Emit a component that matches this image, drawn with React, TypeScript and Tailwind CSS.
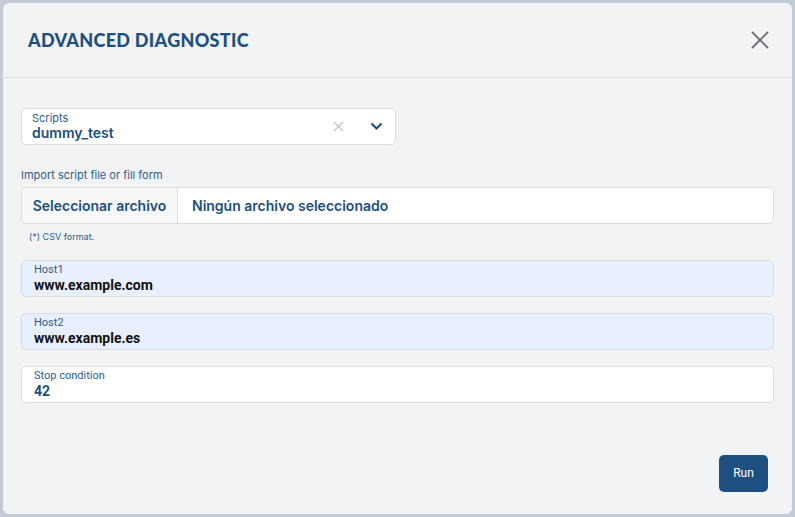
import React from "react";

export default function App() {
  const field = "rounded-[5px] border border-[#d9dde2] h-[37px] px-[12px] flex flex-col justify-center";
  return (
    <div className="w-[795px] h-[517px] bg-[#c3ccd6] p-[3px] overflow-hidden" style={{ fontFamily: "Inter, 'Noto Sans', sans-serif" }}>
      <div className="w-[789px] h-[511px] bg-[#f2f3f5] rounded-[6px] flex flex-col">
        <div className="h-[75px] border-b border-[#d8dbdf] flex items-center justify-between pl-[25px] pr-[22px] shrink-0">
          <div className="text-[#1d4f80] text-[18px] tracking-[0.3px]" style={{ fontFamily: "Lato, Inter, sans-serif", fontWeight: 900 }}>ADVANCED DIAGNOSTIC</div>
          <svg width="20" height="20" viewBox="0 0 20 20" stroke="#6b6f74" strokeWidth="1.8" fill="none"><path d="M2 2L18 18M18 2L2 18" /></svg>
        </div>
        <div className="flex flex-col px-[18px] pt-[30px] flex-1">
          <div className="w-[375px] h-[37px] rounded-[5px] border border-[#d9dde2] bg-white flex items-center justify-between px-[10px]">
            <div className="flex flex-col leading-none">
              <span className="text-[11px] text-[#2f5d8a]">Scripts</span>
              <span className="text-[14px] font-semibold text-[#1d4f80] mt-[2px]">dummy_test</span>
            </div>
            <div className="flex items-center gap-[26px] pr-[2px]">
              <svg width="11" height="11" viewBox="0 0 11 11" stroke="#c7cacd" strokeWidth="1.6"><path d="M1 1L10 10M10 1L1 10" /></svg>
              <svg width="13" height="9" viewBox="0 0 13 9" stroke="#1d4f80" strokeWidth="2.2" fill="none"><path d="M1.5 1.5L6.5 6.5L11.5 1.5" /></svg>
            </div>
          </div>
          <div className="mt-[25px] text-[11px] text-[#2f5d8a] leading-none">Import script file or fill form</div>
          <div className="mt-[6px] h-[37px] rounded-[5px] border border-[#d9dde2] bg-white flex items-center overflow-hidden">
            <div className="h-full w-[156px] bg-[#f6f7f8] border-r border-[#dcdfe3] flex items-center justify-center text-[14px] font-semibold text-[#1d4f80]">Seleccionar archivo</div>
            <div className="pl-[14px] text-[14px] font-semibold text-[#1d4f80]">Ningún archivo seleccionado</div>
          </div>
          <div className="mt-[6px] pl-[8px] text-[9px] text-[#2f5d8a]">(*) CSV format.</div>
          <div className={`${field} mt-[16px] bg-[#e8f0fe] leading-none`} style={{ fontFamily: "Roboto, sans-serif" }}>
            <span className="text-[11px] text-[#2f5d8a]">Host1</span>
            <span className="text-[14px] font-bold text-[#111] mt-[3px]">www.example.com</span>
          </div>
          <div className={`${field} mt-[16px] bg-[#e8f0fe] leading-none`} style={{ fontFamily: "Roboto, sans-serif" }}>
            <span className="text-[11px] text-[#2f5d8a]">Host2</span>
            <span className="text-[14px] font-bold text-[#111] mt-[3px]">www.example.es</span>
          </div>
          <div className={`${field} mt-[16px] bg-white leading-none`} style={{ fontFamily: "Roboto, sans-serif" }}>
            <span className="text-[11px] text-[#2f5d8a]">Stop condition</span>
            <span className="text-[14px] font-bold text-[#1d4f80] mt-[3px]">42</span>
          </div>
          <div className="flex justify-end mt-[52px] pr-[6px]">
            <button className="w-[49px] h-[37px] rounded-[5px] bg-[#1d4f80] text-white text-[12px]" style={{ fontFamily: "Roboto, sans-serif" }}>Run</button>
          </div>
        </div>
      </div>
    </div>
  );
}
